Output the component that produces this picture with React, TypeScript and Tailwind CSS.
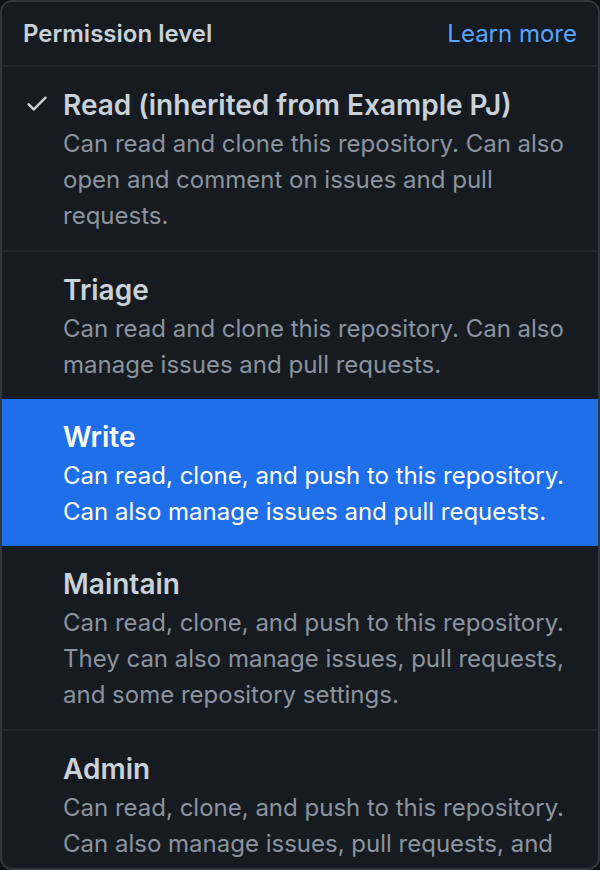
const items = [
  {
    title: 'Read (inherited from Example PJ)',
    desc: 'Can read and clone this repository. Can also open and comment on issues and pull requests.',
    checked: true,
  },
  {
    title: 'Triage',
    desc: 'Can read and clone this repository. Can also manage issues and pull requests.',
  },
  {
    title: 'Write',
    desc: 'Can read, clone, and push to this repository. Can also manage issues and pull requests.',
    selected: true,
  },
  {
    title: 'Maintain',
    desc: 'Can read, clone, and push to this repository. They can also manage issues, pull requests, and some repository settings.',
  },
  {
    title: 'Admin',
    desc: 'Can read, clone, and push to this repository. Can also manage issues, pull requests, and repository settings, including adding collaborators.',
  },
];

function Check() {
  return (
    <svg width="26" height="26" viewBox="0 0 16 16" fill="currentColor">
      <path d="M13.78 4.22a.75.75 0 0 1 0 1.06l-7.25 7.25a.75.75 0 0 1-1.06 0L2.22 9.28a.751.751 0 0 1 .018-1.042.751.751 0 0 1 1.042-.018L6 10.94l6.72-6.72a.75.75 0 0 1 1.06 0Z" />
    </svg>
  );
}

export default function App() {
  return (
    <div className="h-[870px] w-[600px] bg-[#0d1117] overflow-hidden" style={{ fontFamily: 'Inter, "Noto Sans", sans-serif' }}>
      <div className="h-[870px] rounded-[12px] border-2 border-[#30363d] bg-[#161b22] overflow-hidden flex flex-col">
        <div className="flex items-center justify-between h-[65px] px-[21px] border-b-2 border-[#21262d] shrink-0">
          <span className="text-[24px] font-semibold text-[#c9d1d9]">Permission level</span>
          <span className="text-[24px] text-[#58a6ff]">Learn more</span>
        </div>
        {items.map((item, i) => (
          <div
            key={item.title}
            className={`flex pl-[22px] pr-[18px] pt-[17px] pb-[16px] shrink-0 ${
              item.selected ? 'bg-[#1f6feb]' : ''
            } ${i < items.length - 1 && !item.selected && !items[i + 1]?.selected ? 'border-b-2 border-[#21262d]' : ''}`}
          >
            <div className="w-[39px] shrink-0 pt-[6px] text-[#c9d1d9]">{item.checked && <Check />}</div>
            <div className="flex flex-col">
              <div className={`text-[28px] leading-[42px] font-semibold ${item.selected ? 'text-white' : 'text-[#c9d1d9]'}`}>
                {item.title}
              </div>
              <div className={`text-[24px] leading-[36px] ${item.selected ? 'text-white' : 'text-[#8b949e]'}`}>
                {item.desc}
              </div>
            </div>
          </div>
        ))}
      </div>
    </div>
  );
}
